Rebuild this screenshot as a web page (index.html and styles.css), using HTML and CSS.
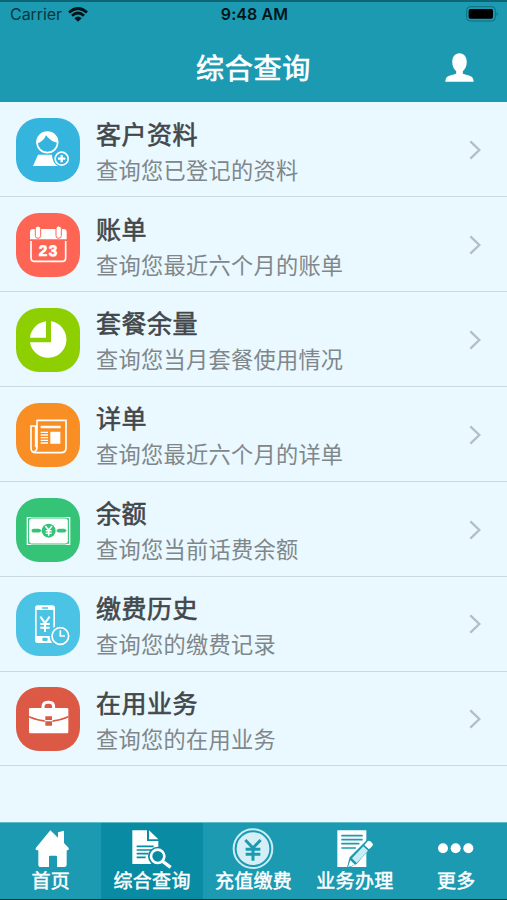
FILE: index.html
```html
<!DOCTYPE html>
<html lang="zh-CN">
<head>
<meta charset="utf-8">
<title>综合查询</title>
<link rel="stylesheet" href="styles.css">
</head>
<body>
<div class="app">
  <header class="header">
    <div class="status">
      <div class="carrier">Carrier
        <svg class="wifi" viewBox="0 0 60 44"><g fill="none" stroke="#00141a" stroke-width="8"><path d="M3 16Q30-8 57 16"/><path d="M12 26Q30 9 48 26"/></g><path fill="#00141a" d="M19 33Q30 23 41 33L30 44Z"/></svg>
      </div>
      <div class="time">9:48 AM</div>
      <div class="power">
        <svg class="battery" viewBox="0 0 99 48"><rect x="2" y="2" width="86" height="43" rx="11" fill="none" stroke="#0f6f82" stroke-width="3"/><rect x="8" y="9" width="73" height="29" rx="5"/><path fill="#0f6f82" d="M92 17q7 7 0 14z"/></svg>
      </div>
    </div>
    <div class="navbar">
      <h1>综合查询</h1>
      <svg class="profile" viewBox="0 0 88 88"><path fill="#fff" d="M44 1c14 0 22 11 22 27 0 12-5 21-12 27v7c4 4 20 4 27 10 4 4 6 10 6 15H1c0-5 2-11 6-15 7-6 23-6 27-10v-7c-7-6-12-15-12-27C22 12 30 1 44 1z"/></svg>
    </div>
  </header>

  <main class="list">
    <a class="row">
      <svg class="tile blue" viewBox="0 0 192 192">
        <path fill="#fff" d="M66 110h42q0 24 20 34H51z"/>
        <circle cx="94" cy="73" r="31" fill="#35b5de" stroke="#fff" stroke-width="5"/>
        <path fill="#fff" d="M62 74A32 32 0 0 1 126 74Q106 73 90 52 84 70 62 77z"/>
        <circle cx="137" cy="122" r="25" fill="#35b5de"/>
        <circle cx="137" cy="122" r="19.500" fill="none" stroke="#fff" stroke-width="5"/>
        <path d="M137 111v22M126 122h22" stroke="#fff" stroke-width="7"/>
      </svg>
      <div class="text"><h2>客户资料</h2><p>查询您已登记的资料</p></div>
      <svg class="chevron" viewBox="0 0 36 60"><path d="M4 4 31 30 4 56"/></svg>
    </a>
    <a class="row">
      <svg class="tile coral" viewBox="0 0 192 192">
        <path fill="#fff" d="M42 79V58q0-10 10-10h90q10 0 10 10v21z"/>
        <path d="M45 84v50q0 11 11 11h82q11 0 11-11V84" fill="none" stroke="#fff" stroke-width="5"/>
        <rect x="58" y="39" width="16" height="37" rx="8" fill="#fff" stroke="#ff6554" stroke-width="3"/>
        <rect x="120" y="39" width="16" height="37" rx="8" fill="#fff" stroke="#ff6554" stroke-width="3"/>
        <text x="98" y="128" class="date">23</text>
      </svg>
      <div class="text"><h2>账单</h2><p>查询您最近六个月的账单</p></div>
      <svg class="chevron" viewBox="0 0 36 60"><path d="M4 4 31 30 4 56"/></svg>
    </a>
    <a class="row">
      <svg class="tile lime" viewBox="0 0 192 192">
        <path fill="#fff" d="M105 40A55 55 0 1 1 42 103H105z"/><path fill="#fff" d="M90 40V89H42A55 55 0 0 1 90 40z"/>
      </svg>
      <div class="text"><h2>套餐余量</h2><p>查询您当月套餐使用情况</p></div>
      <svg class="chevron" viewBox="0 0 36 60"><path d="M4 4 31 30 4 56"/></svg>
    </a>
    <a class="row">
      <svg class="tile orange" viewBox="0 0 192 192">
        <g fill="none" stroke="#fff" stroke-width="5"><path d="M63 52h87v83q0 14-15 14H60q-15 0-15-14V69h14v64M63 50v83q0 10-8 13"/><path d="M74 72h60" stroke-width="7"/><path d="M74 88h22M74 96h22M74 104h22M74 112h22M74 120h22" stroke-width="4"/></g><path fill="#fff" d="M103 86h30v36h-30z"/>
      </svg>
      <div class="text"><h2>详单</h2><p>查询您最近六个月的详单</p></div>
      <svg class="chevron" viewBox="0 0 36 60"><path d="M4 4 31 30 4 56"/></svg>
    </a>
    <a class="row">
      <svg class="tile green" viewBox="0 0 192 192">
        <path d="M34 59h127v80H34z" fill="none" stroke="#fff" stroke-width="4"/><rect x="38" y="60" width="119" height="78" rx="9" fill="#fff" stroke="#35c477" stroke-width="3"/>
        <path d="M47 98h29M122 98h29" stroke="#35c477" stroke-width="5"/><path d="M53 98h15M129 98h15" stroke="#35c477" stroke-width="11" stroke-linecap="round"/>
        <circle cx="98" cy="98" r="21" fill="#35c477"/><path d="M88 84 98 96 108 84M98 96v17M89 98h18M89 106h18" fill="none" stroke="#fff" stroke-width="4.500"/>
      </svg>
      <div class="text"><h2>余额</h2><p>查询您当前话费余额</p></div>
      <svg class="chevron" viewBox="0 0 36 60"><path d="M4 4 31 30 4 56"/></svg>
    </a>
    <a class="row">
      <svg class="tile sky" viewBox="0 0 192 192">
        <rect x="57" y="40" width="60" height="113" rx="8" fill="#fff"/><path fill="#4bc3e5" d="M62 54h50v78H62z"/><path d="M78 48h18" stroke="#4bc3e5" stroke-width="4"/><rect x="79" y="137" width="16" height="10" rx="4" fill="#4bc3e5"/>
        <path d="M73 74 87 93 101 74M87 92v28M73 96h28M73 107h28" fill="none" stroke="#fff" stroke-width="6"/>
        <circle cx="133" cy="132" r="32" fill="#4bc3e5"/><circle cx="133" cy="132" r="25" fill="none" stroke="#fff" stroke-width="5"/><path d="M133 115v17h14" fill="none" stroke="#fff" stroke-width="5"/>
      </svg>
      <div class="text"><h2>缴费历史</h2><p>查询您的缴费记录</p></div>
      <svg class="chevron" viewBox="0 0 36 60"><path d="M4 4 31 30 4 56"/></svg>
    </a>
    <a class="row">
      <svg class="tile red" viewBox="0 0 192 192">
        <rect x="39" y="63" width="118" height="76" rx="4" fill="#fff"/><path d="M81 66v-6q0-14 14-14h4q14 0 14 14v6" fill="none" stroke="#fff" stroke-width="9"/>
        <path d="M39 89Q98 115 157 89" fill="none" stroke="#dc5945" stroke-width="5"/><path fill="#dc5945" d="M88 88h20v28H88z"/><path d="M86 101h24" stroke="#fff" stroke-width="4"/>
      </svg>
      <div class="text"><h2>在用业务</h2><p>查询您的在用业务</p></div>
      <svg class="chevron" viewBox="0 0 36 60"><path d="M4 4 31 30 4 56"/></svg>
    </a>
  </main>

  <nav class="tabs">
    <a class="tab">
      <svg viewBox="0 0 126 126"><path fill="#fff" d="M61 7 84 29V13l18-5v37l14 15q2 7-6 7v43q0 7-7 7H81V86q0-3-3-3H60q-3 0-3 3v31H33q-8 0-8-7V67h-3q-8-2-4-8z"/></svg>
      <span>首页</span>
    </a>
    <a class="tab active">
      <svg viewBox="0 0 126 126"><path fill="#fff" d="M4 7h44v32h34v69H4z"/><path fill="#fff" d="M54 7 82 34H54z"/><path d="M17 55h51M17 66h51M17 77h35M17 88h27" stroke="#098ba3" stroke-width="5"/><circle cx="80" cy="85" r="29" fill="#098ba3"/><circle cx="80" cy="85" r="20" fill="none" stroke="#fff" stroke-width="8"/><path d="m95 100 24 18" stroke="#fff" stroke-width="10"/></svg>
      <span>综合查询</span>
    </a>
    <a class="tab">
      <svg viewBox="0 0 126 126"><circle cx="63" cy="62" r="58" fill="none" stroke="#c9edf5" stroke-width="6"/><circle cx="63" cy="62" r="49" fill="#d4eff6"/><path d="M40 36 63 60 86 36M63 60v38M41 64h44M41 79h44" fill="none" stroke="#1b9ab2" stroke-width="9"/></svg>
      <span>充值缴费</span>
    </a>
    <a class="tab">
      <svg viewBox="0 0 126 126"><path fill="#fff" d="M10 7h87v110H10z"/><path d="M24 23h60M24 35h60M24 47h50M24 60h40" stroke="#1b9ab2" stroke-width="5" stroke-linecap="round"/><path d="m38 122 9-34 54-54q6-6 12 0l4 4q6 6 0 12L68 108z" fill="#1b9ab2"/><path d="m42 117 7-20 14 13z" fill="#fff"/><path d="m54 91 34-36 14 13-34 37z" fill="#c9edf5"/><path d="m91 51 10-11q4-4 8 0l6 6q4 4 0 8l-10 10z" fill="#fff"/></svg>
      <span>业务办理</span>
    </a>
    <a class="tab">
      <svg viewBox="0 0 126 126"><g fill="#fff"><circle cx="24" cy="61" r="15"/><circle cx="62" cy="61" r="15"/><circle cx="100" cy="61" r="15"/></g></svg>
      <span>更多</span>
    </a>
  </nav>
</div>
</body>
</html>
```
FILE: styles.css
```css
* { box-sizing: border-box; }
body { margin: 0; font-family: "Liberation Sans", "Noto Sans CJK SC", sans-serif; }
h1, h2, p { margin: 0; font-weight: 400; white-space: nowrap; }
svg { display: block; flex: none; }

.app { height: 900px; display: flex; flex-direction: column; background: #eaf8ff; overflow: hidden; }

.header { height: 102px; flex: none; background: #1b9ab2; border-top: 2px solid #0c6676; color: #fff; }
.status { height: 32px; display: grid; grid-template-columns: 1fr auto 1fr; padding: 2px 8px 0 10px; color: #00141a; font-family: Inter, sans-serif; font-size: 16px; line-height: 21px; }
.carrier { display: flex; gap: 6px; color: #063740; letter-spacing: -.05px; }
.wifi { width: 20px; height: 15px; margin-top: 3px; }
.time { font-weight: 600; letter-spacing: .1px; }
.power { display: flex; justify-content: flex-end; }
.battery { width: 33px; height: 16px; margin-top: 2px; }

.navbar { height: 66px; display: grid; grid-template-columns: 1fr auto 1fr; align-items: center; padding-right: 33px; padding-left: 33px; }
.navbar h1 { grid-column: 2; padding-top: 5px; font-size: 28px; letter-spacing: .8px; line-height: 42px; -webkit-text-stroke: .7px #fff; }
.profile { width: 29px; height: 29px; justify-self: end; }

.list { flex: 1; padding-top: .5px; }
.row { height: 94.85px; display: flex; align-items: center; padding: 1.500px 25px 0 16px; border-bottom: 1px solid #c9d9e1; }
.tile { width: 64px; height: 64px; border-radius: 23px; }
.blue { background: #35b5de; }
.coral { background: #ff6554; }
.lime { background: #8dcf00; }
.orange { background: #f98e25; }
.green { background: #35c477; }
.sky { background: #4bc3e5; }
.red { background: #dc5945; }
.date { font: 700 46px "Liberation Sans", sans-serif; fill: #fff; stroke: #fff; stroke-width: 2px; text-anchor: middle; letter-spacing: 4px; text-rendering: geometricPrecision; }
.text { flex: 1; padding: 6px 0 0 16px; }
.text h2 { font-size: 25px; letter-spacing: .5px; line-height: 37px; color: #42474a; -webkit-text-stroke: .6px #42474a; }
.text p { font-size: 22.2px; letter-spacing: .3px; line-height: 36px; color: #80878a; }
.chevron { width: 12px; height: 20px; margin-right: 1px; }
.chevron path { fill: none; stroke: #b2bfc4; stroke-width: 7; }

.tabs { height: 78px; flex: none; display: grid; grid-template-columns: repeat(5, 1fr); background: #1b9ab2; border-top: 1px solid #61bac7; border-bottom: 1px solid #07343f; }
.tab { display: flex; flex-direction: column; align-items: center; padding-top: 5px; color: #fff; }
.tab svg { width: 42px; height: 42px; }
.tab span { padding-top: 1px; font-size: 19px; letter-spacing: .3px; line-height: 22px; white-space: nowrap; -webkit-text-stroke: .5px #fff; }
.active { background: #098ba3; }
```
